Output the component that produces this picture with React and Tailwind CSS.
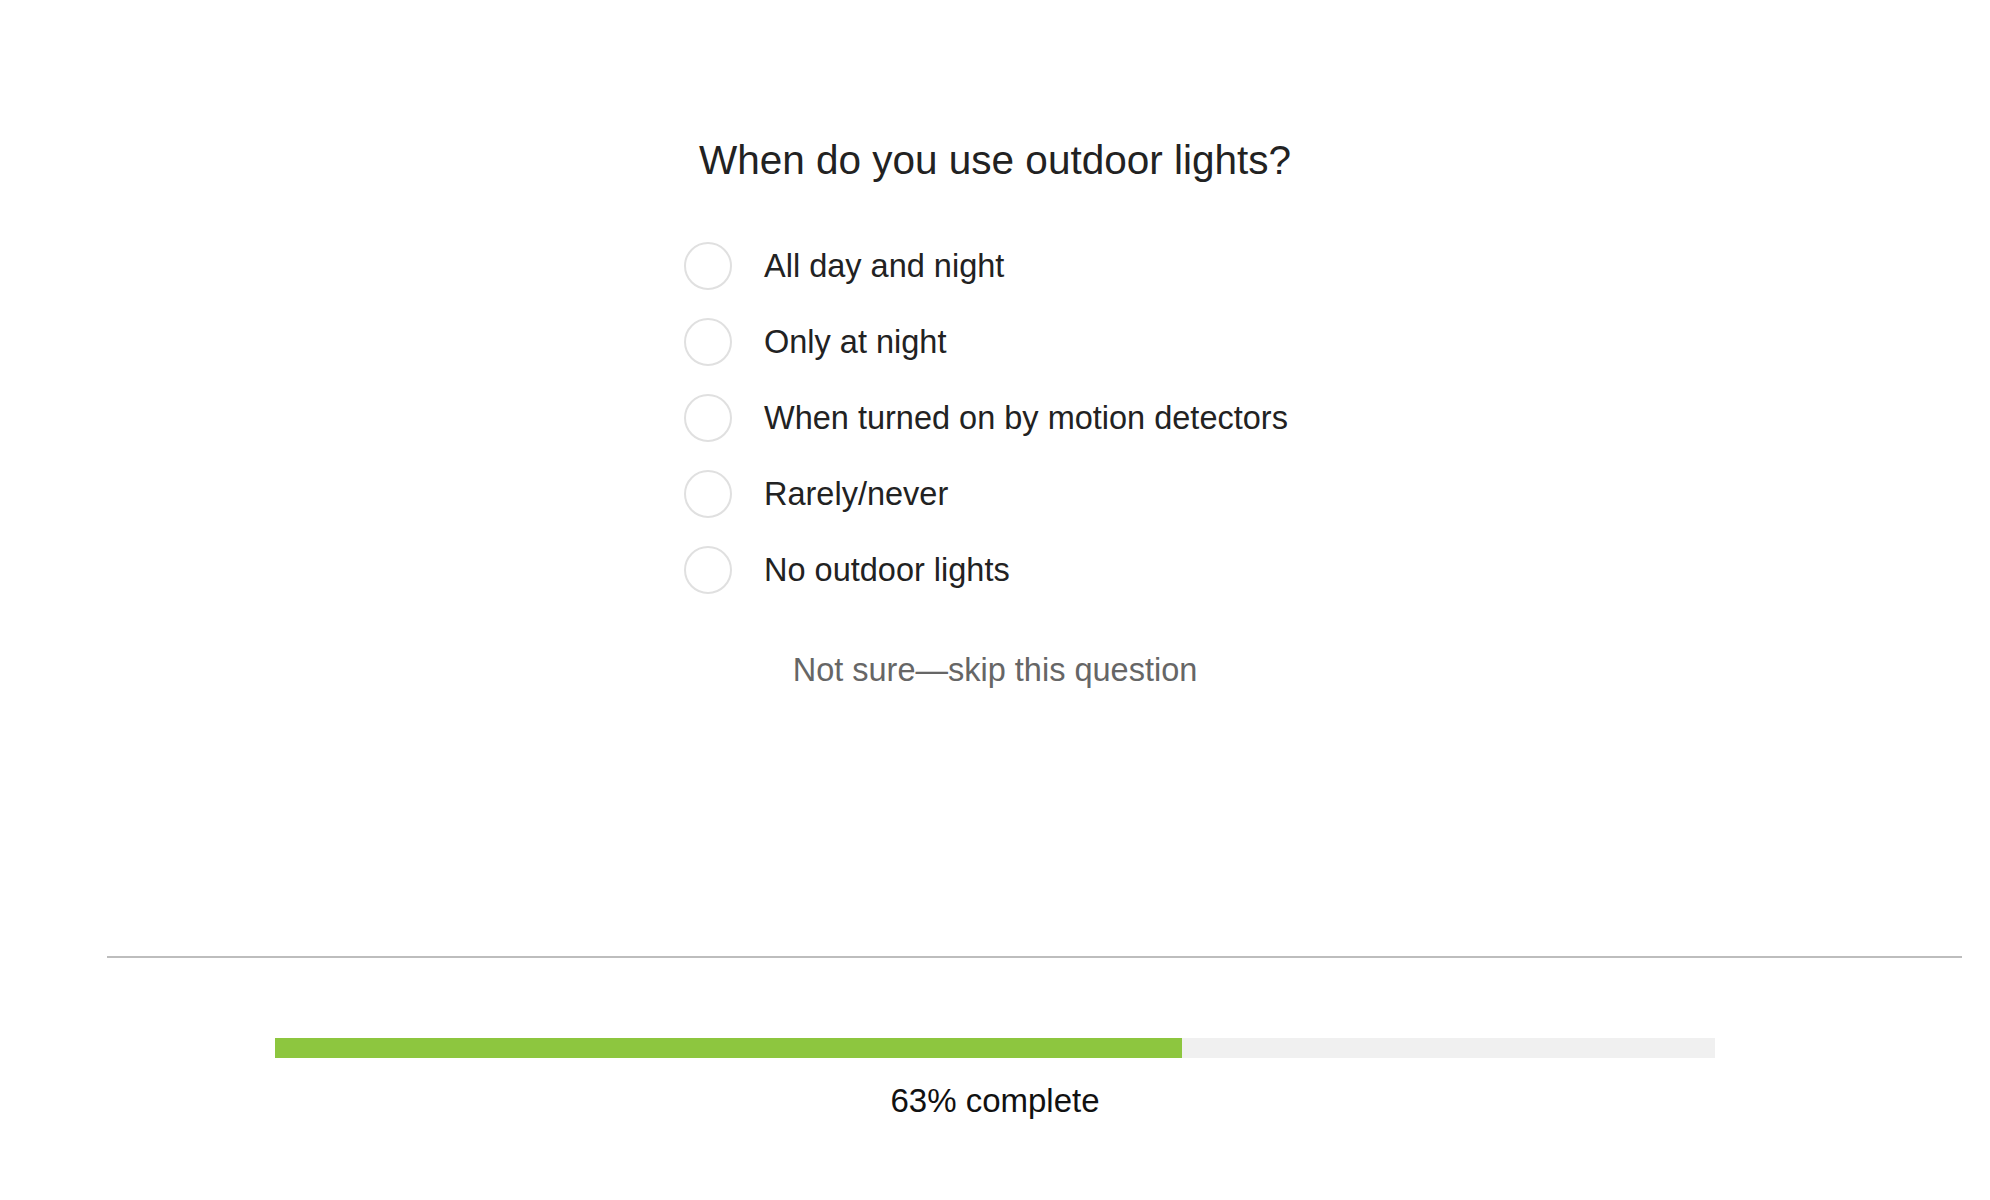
import React from 'react';

const OPTIONS = [
  'All day and night',
  'Only at night',
  'When turned on by motion detectors',
  'Rarely/never',
  'No outdoor lights',
];

export default function App() {
  const progress = 63;

  return (
    <div className="min-h-screen bg-white font-['Liberation_Sans',Arial,sans-serif] pb-10">
      {/* Question */}
      <div className="pt-[136px]">
        <h1 className="text-center text-[40.5px] leading-[48px] text-[#222222]">
          When do you use outdoor lights?
        </h1>

        <div className="w-[622px] mx-auto mt-[44px]">
          {OPTIONS.map(label => (
            <label key={label} className="h-[76px] flex items-center cursor-pointer">
              <span className="w-[48px] h-[48px] rounded-full border-2 border-[#e0e0e0] shrink-0" />
              <span className="ml-[32px] text-[32.5px] leading-[36px] text-[#222222]">{label}</span>
            </label>
          ))}
        </div>

        <div className="mt-[44px] text-center text-[32.5px] leading-[36px] text-[#666666]">
          Not sure—skip this question
        </div>
      </div>

      {/* Divider */}
      <div className="mt-[268px] ml-[107px] mr-[28px] h-[2px] bg-[#bdbdbd]" />

      {/* Progress */}
      <div className="mt-[80px] w-[1440px] mx-auto h-[20px] bg-[#f0f0f0]">
        <div className="h-full bg-[#8dc63f]" style={{ width: `${progress}%` }} />
      </div>
      <div className="mt-[25px] text-center text-[33px] leading-[36px] text-[#111111]">
        {progress}% complete
      </div>
    </div>
  );
}
